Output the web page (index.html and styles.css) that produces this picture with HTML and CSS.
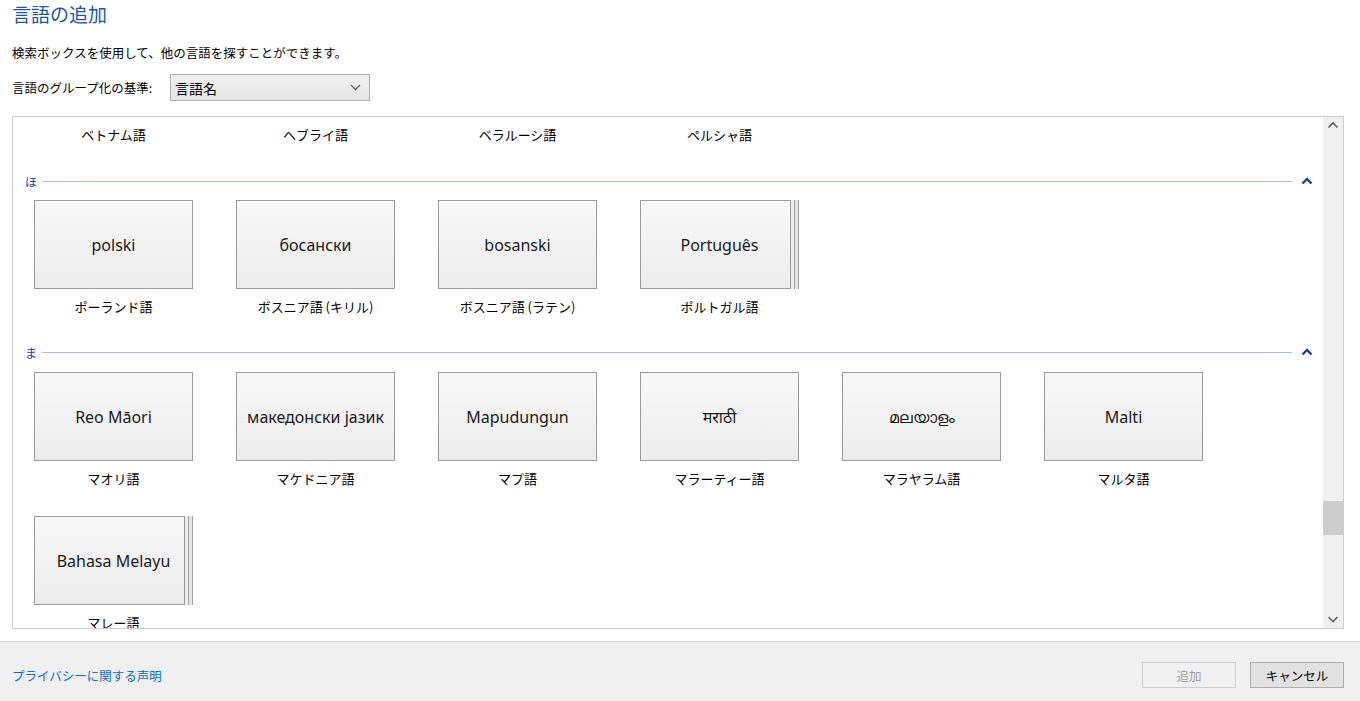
FILE: index.html
```html
<!DOCTYPE html>
<html lang="ja">
<head>
<meta charset="utf-8">
<title>言語の追加</title>
<link rel="stylesheet" href="styles.css">
</head>
<body>
<div class="main">
  <h1 class="title">言語の追加</h1>
  <p class="desc">検索ボックスを使用して、他の言語を探すことができます。</p>
  <div class="group-row">
    <span class="group-label">言語のグループ化の基準:</span>
    <div class="select">
      <span>言語名</span>
      <svg class="sel-chev" width="11" height="7" viewBox="0 0 11 7"><polyline points="1,1 5.5,5.5 10,1" fill="none" stroke="#606060" stroke-width="1.3"/></svg>
    </div>
  </div>

  <div class="listbox">
    <div class="list-content">
      <div class="grid label-only">
        <div class="item"><div class="name">ベトナム語</div></div>
        <div class="item"><div class="name">ヘブライ語</div></div>
        <div class="item"><div class="name">ベラルーシ語</div></div>
        <div class="item"><div class="name">ペルシャ語</div></div>
      </div>

      <div class="section">
        <div class="sec-head">
          <span class="sec-letter">ほ</span>
          <span class="sec-line"></span>
          <svg class="sec-chev" width="12" height="8" viewBox="0 0 12 8"><polyline points="1.5,6.5 6,2 10.5,6.5" fill="none" stroke="#1b3f94" stroke-width="2.4"/></svg>
        </div>
        <div class="grid">
          <div class="item"><div class="tile">polski</div><div class="name">ポーランド語</div></div>
          <div class="item"><div class="tile">босански</div><div class="name">ボスニア語 (キリル)</div></div>
          <div class="item"><div class="tile">bosanski</div><div class="name">ボスニア語 (ラテン)</div></div>
          <div class="item"><div class="tile stacked">Português</div><div class="name">ポルトガル語</div></div>
        </div>
      </div>

      <div class="section">
        <div class="sec-head">
          <span class="sec-letter">ま</span>
          <span class="sec-line"></span>
          <svg class="sec-chev" width="12" height="8" viewBox="0 0 12 8"><polyline points="1.5,6.5 6,2 10.5,6.5" fill="none" stroke="#1b3f94" stroke-width="2.4"/></svg>
        </div>
        <div class="grid">
          <div class="item"><div class="tile">Reo Māori</div><div class="name">マオリ語</div></div>
          <div class="item"><div class="tile">македонски јазик</div><div class="name">マケドニア語</div></div>
          <div class="item"><div class="tile">Mapudungun</div><div class="name">マプ語</div></div>
          <div class="item"><div class="tile">मराठी</div><div class="name">マラーティー語</div></div>
          <div class="item"><div class="tile">മലയാളം</div><div class="name">マラヤラム語</div></div>
          <div class="item"><div class="tile">Malti</div><div class="name">マルタ語</div></div>
          <div class="item"><div class="tile stacked">Bahasa Melayu</div><div class="name">マレー語</div></div>
        </div>
      </div>
    </div>
    <div class="scrollbar">
      <svg class="sb-arrow" width="20" height="17" viewBox="0 0 20 17"><polyline points="5.5,10.5 10,6 14.5,10.5" fill="none" stroke="#606060" stroke-width="1.6"/></svg>
      <div class="sb-track"><div class="sb-thumb"></div></div>
      <svg class="sb-arrow" width="20" height="17" viewBox="0 0 20 17"><polyline points="5.5,6 10,10.5 14.5,6" fill="none" stroke="#606060" stroke-width="1.6"/></svg>
    </div>
  </div>
</div>

<div class="footer">
  <a class="privacy" href="#">プライバシーに関する声明</a>
  <div class="buttons">
    <button class="btn disabled" disabled>追加</button>
    <button class="btn">キャンセル</button>
  </div>
</div>
</body>
</html>
```

FILE: styles.css
```css
html, body {
  margin: 0;
  padding: 0;
  background: #ffffff;
}
body {
  width: 1360px;
  height: 701px;
  overflow: hidden;
  font-family: "Noto Sans CJK JP", "Noto Sans", sans-serif;
  color: #000;
  display: flex;
  flex-direction: column;
}
.main {
  padding: 2px 16px 0 12px;
  height: 641px;
  flex: 0 0 641px;
  box-sizing: border-box;
}
.title {
  margin: 0;
  font-weight: normal;
  font-size: 19px;
  line-height: 24px;
  color: #1c57a8;
}
.desc {
  margin: 18px 0 0;
  font-size: 12.5px;
  line-height: 18px;
}
.group-row {
  margin-top: 12px;
  display: flex;
  align-items: center;
  height: 27px;
}
.group-label {
  font-size: 12.5px;
  line-height: 18px;
  width: 158px;
}
.select {
  width: 200px;
  height: 27px;
  box-sizing: border-box;
  border: 1px solid #adadad;
  background: linear-gradient(#f0f0f0, #e6e6e6);
  display: flex;
  align-items: center;
  justify-content: space-between;
  padding: 0 8px 0 4px;
  font-size: 14px;
}
.sel-chev { display: block; }

.listbox {
  margin-top: 15px;
  height: 513px;
  box-sizing: border-box;
  border: 1px solid #cccccc;
  display: flex;
}
.list-content {
  flex: 1;
  overflow: hidden;
  padding-top: 8px;
}
.grid {
  display: grid;
  grid-template-columns: repeat(6, 159px);
  column-gap: 43px;
  row-gap: 27px;
  padding-left: 21px;
}
.label-only .name { margin-top: 0; }
.item {
  display: flex;
  flex-direction: column;
  align-items: stretch;
}
.tile {
  height: 89px;
  box-sizing: border-box;
  border: 1px solid #9a9a9a;
  background: linear-gradient(#f8f8f8, #ececec);
  display: flex;
  align-items: center;
  justify-content: center;
  font-family: "Noto Sans", "Open Sans", "Noto Sans CJK JP", sans-serif;
  font-size: 16px;
  color: #1a1a1a;
  white-space: nowrap;
}
.tile.stacked {
  width: 151px;
  padding-left: 8px;
  box-shadow: 3px 0 0 #ececec, 4px 0 0 #a0a0a0, 7px 0 0 #e6e6e6, 8px 0 0 #a0a0a0;
}
.name {
  margin-top: 8px;
  height: 20px;
  line-height: 20px;
  text-align: center;
  font-size: 13px;
  white-space: nowrap;
}
.section { margin-top: 26px; }
.section + .section { margin-top: 25px; }
.sec-head {
  display: flex;
  align-items: center;
  height: 20px;
  padding-left: 12px;
  margin-bottom: 9px;
}
.section + .section .sec-head { margin-bottom: 10px; }
.sec-letter {
  font-size: 12px;
  color: #2438a6;
  width: 17px;
}
.sec-line {
  flex: 0 0 1250px;
  height: 1px;
  background: #a8bde4;
}
.sec-chev {
  display: block;
  margin-left: 9px;
}
.scrollbar {
  width: 20px;
  background: #f0f0f0;
  display: flex;
  flex-direction: column;
}
.sb-arrow { display: block; flex: 0 0 17px; }
.sb-track { flex: 1; }
.sb-thumb {
  margin-top: 367px;
  height: 34px;
  background: #cdcdcd;
}

.footer {
  flex: 1;
  border-top: 1px solid #d3d3d3;
  background: #f0f0f0;
  display: flex;
  align-items: center;
  justify-content: space-between;
  padding: 7px 16px 0 12px;
}
.privacy {
  font-size: 12.5px;
  color: #0a6bcc;
  text-decoration: none;
}
.buttons {
  display: flex;
  gap: 14px;
}
.btn {
  width: 94px;
  height: 26px;
  box-sizing: border-box;
  border: 1px solid #adadad;
  background: #e1e1e1;
  font-family: "Noto Sans CJK JP", sans-serif;
  font-size: 12.5px;
  color: #000;
  padding: 0;
}
.btn.disabled {
  border-color: #cccccc;
  background: #f0f0f0;
  color: #a0a0a0;
}
```
